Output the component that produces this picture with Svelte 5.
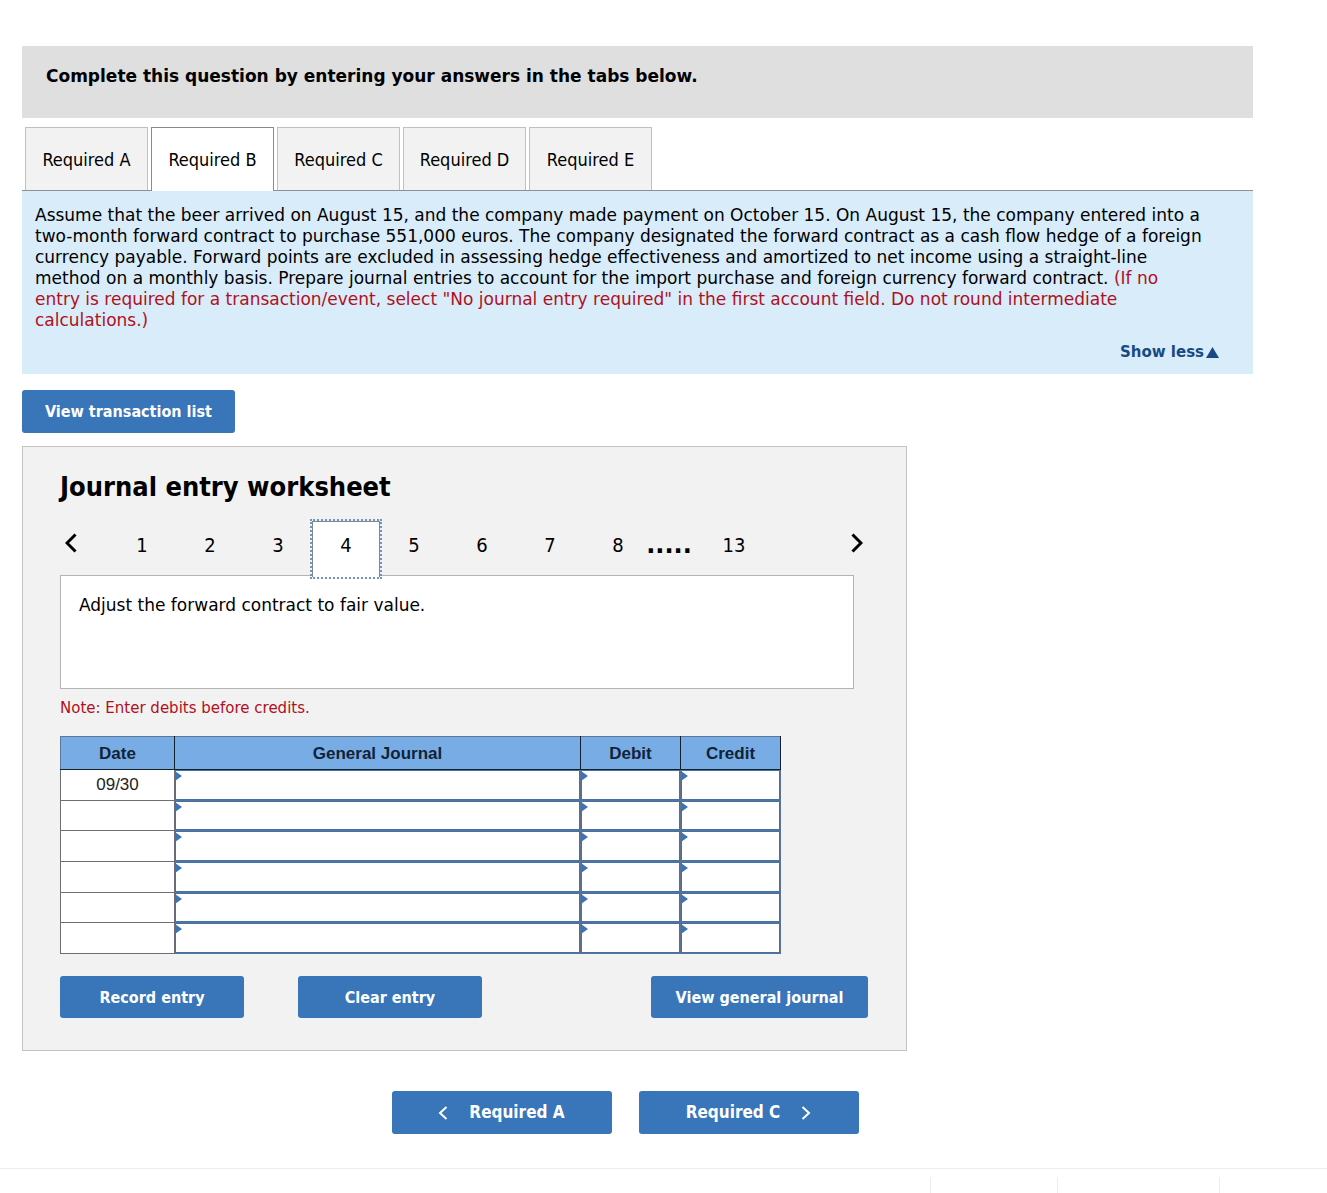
<script>
  const tabs = ['Required A', 'Required B', 'Required C', 'Required D', 'Required E'];
  const pages = [1, 2, 3, 4, 5, 6, 7, 8];
  const columns = ['General Journal', 'Debit', 'Credit'];

  let activeTab = $state('Required B');
  let activePage = $state(4);
  let rows = $state(
    ['09/30', '', '', '', '', ''].map((date) => ({ date, values: ['', '', ''] }))
  );

  function clearEntry() {
    for (const row of rows) row.values = ['', '', ''];
  }
</script>

<main>
  <div class="banner">Complete this question by entering your answers in the tabs below.</div>

  <div class="tabs" role="tablist">
    {#each tabs as tab}
      <button
        class="tab"
        class:active={tab === activeTab}
        role="tab"
        aria-selected={tab === activeTab}
        onclick={() => (activeTab = tab)}>{tab}</button>
    {/each}
  </div>

  <section class="prompt">
    <p>
      Assume that the beer arrived on August 15, and the company made payment on October 15. On August 15, the company entered into a two-month forward contract to purchase 551,000 euros. The company designated the forward contract as a cash flow hedge of a foreign currency payable. Forward points are excluded in assessing hedge effectiveness and amortized to net income using a straight-line method on a monthly basis. Prepare journal entries to account for the import purchase and foreign currency forward contract.
      <span class="red">(If no entry is required for a transaction/event, select "No journal entry required" in the first account field. Do not round intermediate calculations.)</span>
    </p>
    <button class="less">Show less<svg width="13" height="11" viewBox="0 0 13 11" aria-hidden="true"><path d="M6.5 0L13 11H0Z" fill="#174a85" /></svg></button>
  </section>

  <button class="action">View transaction list</button>

  <section class="worksheet">
    <h1>Journal entry worksheet</h1>

    <nav class="pager" aria-label="Journal entries">
      <button class="arrow" aria-label="Previous entry">
        <svg width="12" height="20" viewBox="0 0 12 20" fill="none" stroke="#000" stroke-width="3" aria-hidden="true"><path d="M10.5 1.5L2 10L10.5 18.5" /></svg>
      </button>
      {#each pages as page}
        <button class="page" class:current={page === activePage} onclick={() => (activePage = page)}>{page}</button>
      {/each}
      <span class="dots">.....</span>
      <button class="page" class:current={activePage === 13} onclick={() => (activePage = 13)}>13</button>
      <button class="arrow next" aria-label="Next entry">
        <svg width="12" height="20" viewBox="0 0 12 20" fill="none" stroke="#000" stroke-width="3" aria-hidden="true"><path d="M1.5 1.5L10 10L1.5 18.5" /></svg>
      </button>
    </nav>

    <div class="description">Adjust the forward contract to fair value.</div>
    <p class="note">Note: Enter debits before credits.</p>

    <table>
      <colgroup><col class="c-date" /><col /><col class="c-amount" /><col class="c-amount" /></colgroup>
      <thead>
        <tr>
          <th scope="col">Date</th>
          {#each columns as column}<th scope="col">{column}</th>{/each}
        </tr>
      </thead>
      <tbody>
        {#each rows as row, r}
          <tr>
            <td class="date">{row.date}</td>
            {#each columns as column, c}
              <td class="entry"><input type="text" aria-label={`${column}, line ${r + 1}`} bind:value={row.values[c]} /></td>
            {/each}
          </tr>
        {/each}
      </tbody>
    </table>

    <div class="actions">
      <button class="action">Record entry</button>
      <button class="action" onclick={clearEntry}>Clear entry</button>
      <button class="action journal">View general journal</button>
    </div>
  </section>

  <div class="steps">
    <button class="action step">
      <svg width="10" height="14" viewBox="0 0 10 14" fill="none" stroke="#fff" stroke-width="2" aria-hidden="true"><path d="M8.5 1L2 7L8.5 13" /></svg>
      Required A
    </button>
    <button class="action step">
      Required C
      <svg width="10" height="14" viewBox="0 0 10 14" fill="none" stroke="#fff" stroke-width="2" aria-hidden="true"><path d="M1.5 1L8 7L1.5 13" /></svg>
    </button>
  </div>
</main>

<footer><span></span><span></span><span></span></footer>

<style>
  :global(body) {
    margin: 0;
    background: #fff;
  }

  main,
  footer,
  main * {
    box-sizing: border-box;
  }

  main {
    padding: 46px 74px 34px 22px;
    font-family: Verdana, 'DejaVu Sans', sans-serif;
    font-size: 17px;
    line-height: 21px;
    color: #000;
  }

  button {
    margin: 0;
    padding: 0;
    border: 0;
    background: none;
    color: inherit;
    font: inherit;
    cursor: pointer;
  }

  .banner {
    min-height: 72px;
    padding: 20px 24px;
    background: #dfdfdf;
    font-weight: bold;
  }

  .tabs {
    display: flex;
    gap: 3px;
    margin-top: 9px;
    padding-left: 3px;
  }

  .tab {
    width: 123px;
    height: 63px;
    border: 1px solid #c0c0c0;
    border-bottom: 0;
    background: #f2f2f2;
    font-family: Tahoma, 'DejaVu Sans Condensed', 'DejaVu Sans', sans-serif;
    font-size: 18px;
  }

  .tab.active {
    height: 64px;
    margin-bottom: -1px;
    border-color: #8a8a8a;
    background: #fff;
    z-index: 1;
  }

  .prompt {
    display: flex;
    flex-direction: column;
    border-top: 1px solid #8c9195;
    padding: 14px 16px 11px 13px;
    background: #d9ecfa;
  }

  .prompt p {
    margin: 0;
    padding-right: 32px;
  }

  .red {
    color: #b01020;
  }

  .less {
    display: flex;
    align-items: center;
    gap: 2px;
    align-self: flex-end;
    margin: 11px 18px 0 0;
    color: #174a85;
    font-size: 15px;
    font-weight: bold;
  }

  .action {
    height: 43px;
    padding: 0 23px;
    border-radius: 3px;
    background: #3875b9;
    color: #fff;
    font-family: Tahoma, 'DejaVu Sans Condensed', 'DejaVu Sans', sans-serif;
    font-size: 16px;
    font-weight: bold;
  }

  main > .action {
    display: block;
    margin: 16px 0 13px;
  }

  .worksheet {
    max-width: 885px;
    padding: 24px 38px 32px 37px;
    border: 1px solid #c4c4c4;
    background: #f2f2f2;
  }

  h1 {
    margin: 0 0 18px;
    font-family: Tahoma, 'DejaVu Sans Condensed', 'DejaVu Sans', sans-serif;
    font-size: 27px;
    line-height: 32px;
  }

  .pager {
    display: flex;
    align-items: flex-start;
    font-family: Tahoma, 'DejaVu Sans Condensed', 'DejaVu Sans', sans-serif;
    font-size: 20px;
  }

  .arrow {
    display: flex;
    align-items: center;
    width: 48px;
    height: 44px;
    padding-left: 5px;
  }

  .arrow.next {
    width: 22px;
    margin-left: auto;
  }

  .page {
    width: 68px;
    height: 48px;
  }

  .page.current {
    height: 56px;
    margin-bottom: -2px;
    padding-bottom: 8px;
    border: 1px solid #7f8791;
    border-bottom: 0;
    outline: 2px dotted #6f95c5;
    background: #fff;
    z-index: 1;
  }

  .dots {
    display: flex;
    justify-content: center;
    width: 48px;
    height: 48px;
    padding-right: 14px;
    font-family: 'DejaVu Sans', sans-serif;
    font-size: 24px;
    font-weight: bold;
    line-height: 48px;
  }

  .description {
    min-height: 114px;
    margin-right: 14px;
    padding: 19px 18px;
    border: 1px solid #b4b4b4;
    background: #fff;
  }

  .note {
    margin: 9px 0 17px;
    color: #b01020;
    font-size: 15px;
  }

  table {
    width: 100%;
    max-width: 721px;
    height: 218px;
    border-collapse: collapse;
    table-layout: fixed;
    background: #fff;
    color: #222;
    font-family: 'Liberation Sans', Arial, sans-serif;
  }

  .c-date {
    width: 114px;
  }

  .c-amount {
    width: 100px;
  }

  th {
    height: 33px;
    padding: 0;
    border: 1px solid #14202c;
    border-top-color: #59789c;
    background: #78ace5;
    color: #122336;
  }

  th:first-child {
    border-left-color: #59789c;
  }

  td {
    padding: 0;
    border: 1px solid #6b6f75;
  }

  .date {
    text-align: center;
  }

  .entry {
    position: relative;
    height: 30px;
    border-color: #5b738f;
  }

  thead + tbody tr:first-child td {
    border-top-color: #14202c;
  }

  .entry input {
    display: block;
    width: 100%;
    height: 100%;
    padding: 0 10px;
    border: 1px solid #4272ab;
    border-radius: 0;
    background: transparent;
    font: inherit;
    outline: 0;
  }

  .entry::before {
    content: '';
    position: absolute;
    top: 1px;
    left: 0;
    border: solid transparent;
    border-width: 5px 0 5px 7px;
    border-left-color: #3c74b6;
  }

  .actions {
    display: flex;
    gap: 54px;
    margin-top: 22px;
  }

  .actions .action {
    width: 184px;
    height: 42px;
    padding: 0;
  }

  .actions .journal {
    width: 217px;
    margin-left: auto;
  }

  .steps {
    display: flex;
    justify-content: center;
    gap: 27px;
    margin-top: 40px;
    padding-right: 25px;
  }

  .step {
    display: flex;
    align-items: center;
    justify-content: center;
    gap: 21px;
    width: 220px;
    padding: 0;
    font-size: 17px;
  }

  footer {
    display: flex;
    justify-content: flex-end;
    padding-top: 8px;
    border-top: 1px solid #ececec;
  }

  footer span {
    box-sizing: border-box;
    width: 127px;
    height: 16px;
    border-left: 1px solid #ececec;
  }

  footer span:nth-child(2) {
    width: 162px;
  }

  footer span:nth-child(3) {
    width: 108px;
  }
</style>
